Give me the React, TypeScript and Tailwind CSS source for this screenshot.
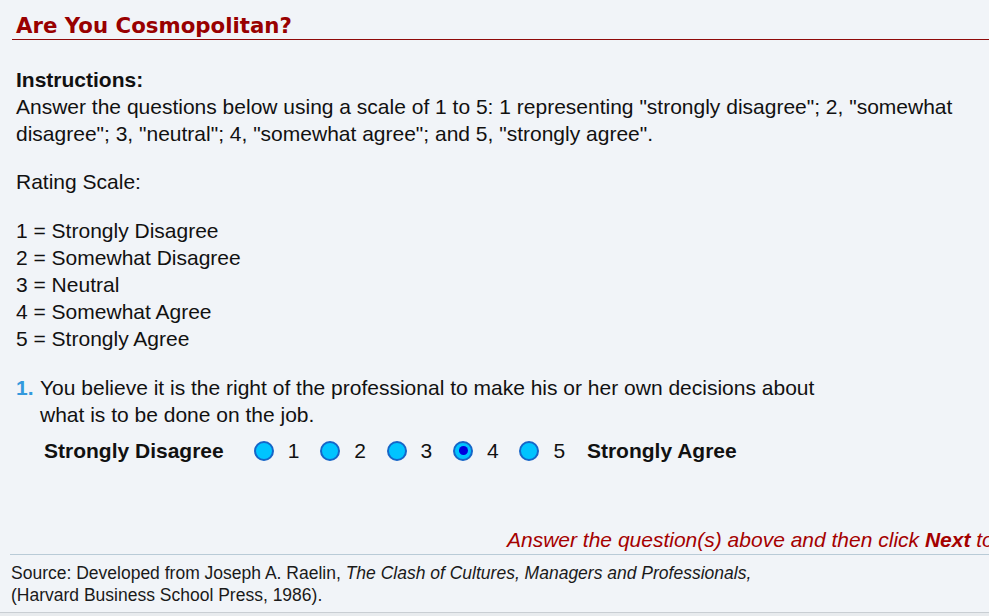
import React from "react";

const scale = [
  "1 = Strongly Disagree",
  "2 = Somewhat Disagree",
  "3 = Neutral",
  "4 = Somewhat Agree",
  "5 = Strongly Agree",
];

function Radio({ checked }: { checked?: boolean }) {
  return (
    <span className="flex h-[20px] w-[20px] shrink-0 items-center justify-center rounded-full border-[2.5px] border-[#1565c8] bg-[#00c4ff]">
      {checked && <span className="h-[9px] w-[9px] rounded-full bg-[#0000dd]" />}
    </span>
  );
}

export default function App() {
  const selected = 4;
  return (
    <div
      className="flex h-[616px] flex-col overflow-hidden bg-[#f1f4f8] text-[#111]"
      style={{ fontFamily: '"Liberation Sans", Arial, sans-serif' }}
    >
      {/* Title */}
      <h1
        className="ml-3 mt-[14px] border-b-[1.5px] border-[#8f0a0a] pb-[1px] pl-1 text-[21.3px] font-bold leading-[24px] text-[#990000]"
        style={{ fontFamily: '"DejaVu Sans", Verdana, sans-serif' }}
      >
        Are You Cosmopolitan?
      </h1>

      <div className="px-4 text-[21px] leading-[27px]">
        {/* Instructions */}
        <div className="mt-[26px]">
          <div className="font-bold">Instructions:</div>
          <p>
            Answer the questions below using a scale of 1 to 5: 1 representing "strongly disagree"; 2, "somewhat
            disagree"; 3, "neutral"; 4, "somewhat agree"; and 5, "strongly agree".
          </p>
        </div>

        <p className="mt-[21px]">Rating Scale:</p>

        <ul className="mt-[22px]">
          {scale.map((s) => (
            <li key={s}>{s}</li>
          ))}
        </ul>

        {/* Question 1 */}
        <div className="mt-[22px] flex">
          <span className="w-6 font-bold text-[#3399dd]">1.</span>
          <p className="w-[800px]">
            You believe it is the right of the professional to make his or her own decisions about what is to be done on
            the job.
          </p>
        </div>

        <div className="mt-[9px] flex items-center pl-7">
          <span className="mr-[30px] font-bold">Strongly Disagree</span>
          {[1, 2, 3, 4, 5].map((n) => (
            <label key={n} className="mr-[20.75px] flex items-center gap-[14px]">
              <Radio checked={n === selected} />
              <span>{n}</span>
            </label>
          ))}
          <span className="ml-[1px] font-bold">Strongly Agree</span>
        </div>
      </div>

      {/* Prompt */}
      <div className="mt-[62px] overflow-hidden whitespace-nowrap pl-[507px] text-[21px] italic leading-[27px] text-[#a50000]">
        Answer the question(s) above and then click <b>Next</b> to continue.
      </div>

      {/* Source */}
      <div className="ml-[10px] mt-[1px] border-t border-[#b9cbd7] pb-[6px] pl-[1px] pt-[7px] text-[17.5px] leading-[22px] text-[#1a1a1a]">
        Source: Developed from Joseph A. Raelin, <i>The Clash of Cultures, Managers and Professionals,</i>
        <br />
        (Harvard Business School Press, 1986).
      </div>

      <div className="flex-1 border-t border-[#c9ced3] bg-[#e8ebee]" />
    </div>
  );
}
